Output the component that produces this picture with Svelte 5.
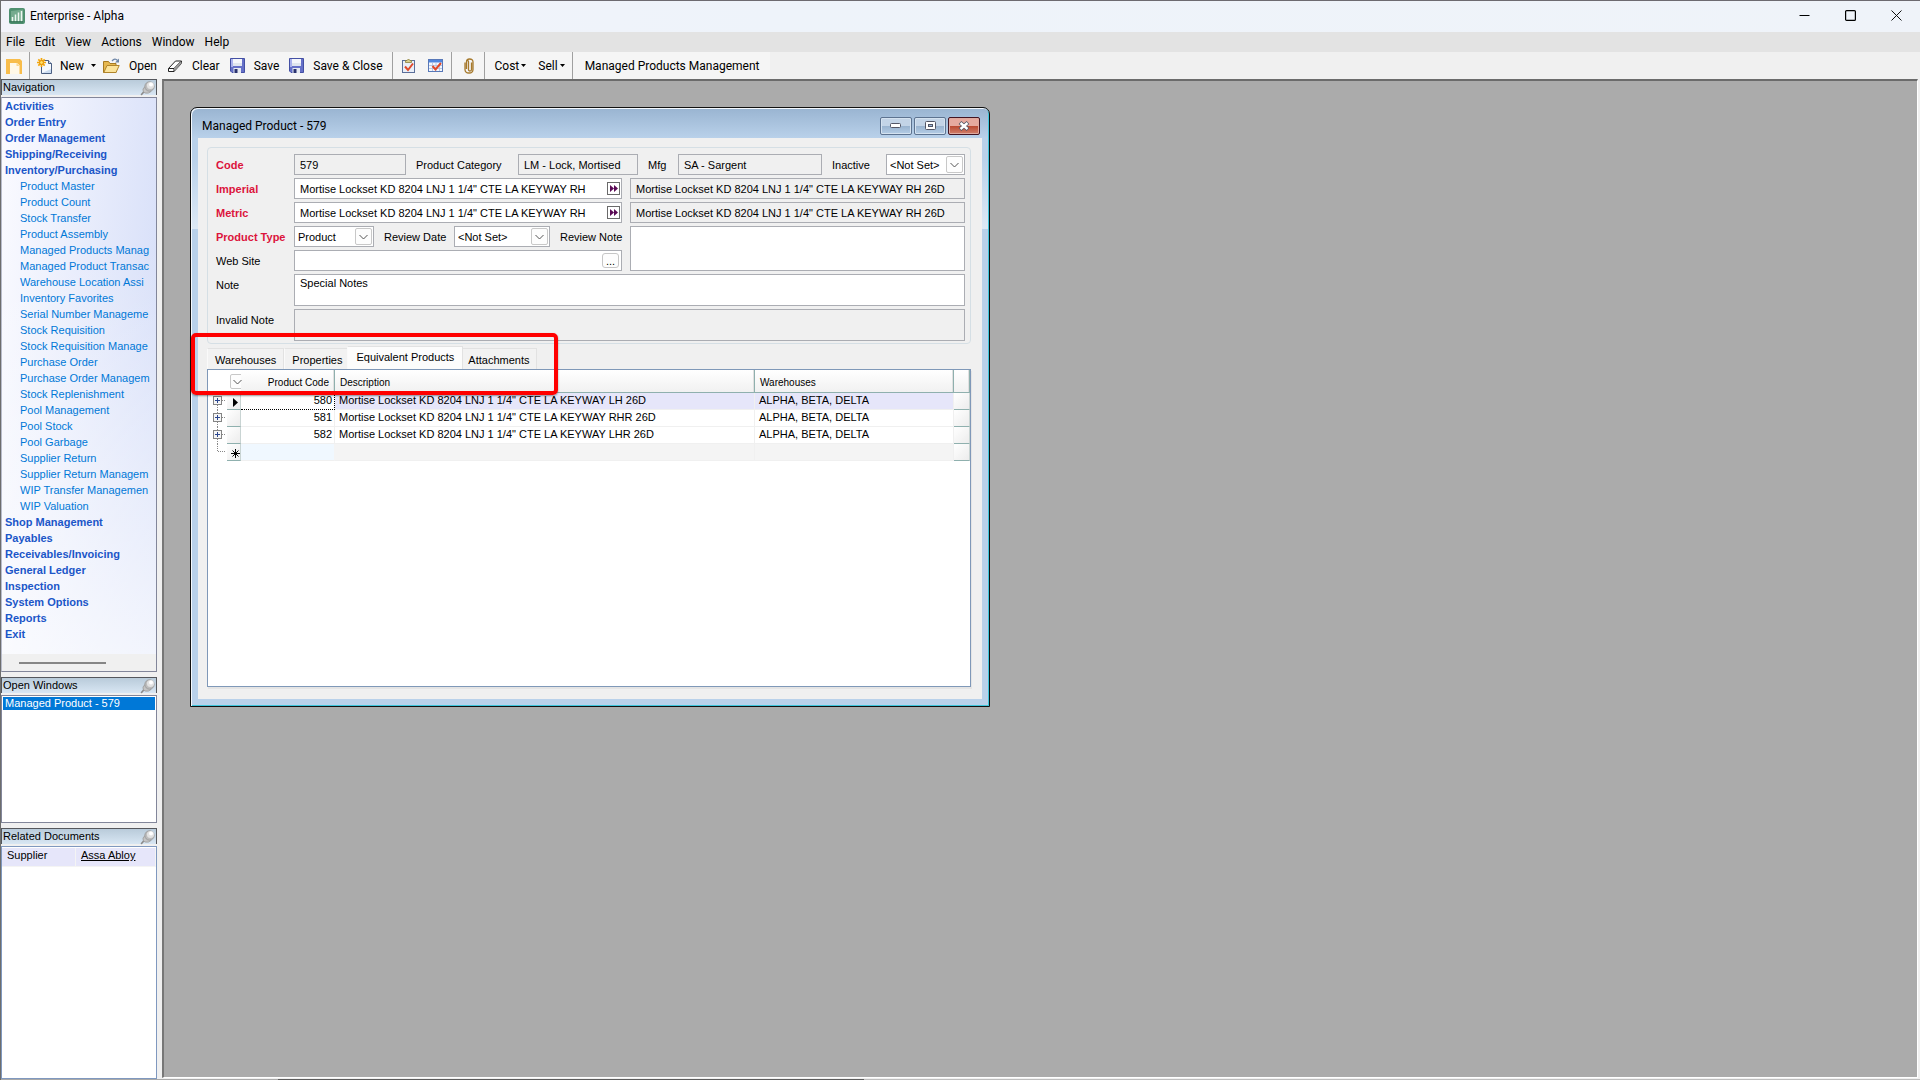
<script lang="ts">
	interface Row {
		code: number;
		description: string;
		warehouses: string;
	}

	const menus = ['File', 'Edit', 'View', 'Actions', 'Window', 'Help'];

	const purchasing = [
		'Product Master',
		'Product Count',
		'Stock Transfer',
		'Product Assembly',
		'Managed Products Manag',
		'Managed Product Transac',
		'Warehouse Location Assi',
		'Inventory Favorites',
		'Serial Number Manageme',
		'Stock Requisition',
		'Stock Requisition Manage',
		'Purchase Order',
		'Purchase Order Managem',
		'Stock Replenishment',
		'Pool Management',
		'Pool Stock',
		'Pool Garbage',
		'Supplier Return',
		'Supplier Return Managem',
		'WIP Transfer Managemen',
		'WIP Valuation'
	];

	const sections: { name: string; items: string[] }[] = [
		{ name: 'Activities', items: [] },
		{ name: 'Order Entry', items: [] },
		{ name: 'Order Management', items: [] },
		{ name: 'Shipping/Receiving', items: [] },
		{ name: 'Inventory/Purchasing', items: purchasing },
		{ name: 'Shop Management', items: [] },
		{ name: 'Payables', items: [] },
		{ name: 'Receivables/Invoicing', items: [] },
		{ name: 'General Ledger', items: [] },
		{ name: 'Inspection', items: [] },
		{ name: 'System Options', items: [] },
		{ name: 'Reports', items: [] },
		{ name: 'Exit', items: [] }
	];

	const tabs = ['Warehouses', 'Properties', 'Equivalent Products', 'Attachments'];
	let activeTab = $state('Equivalent Products');

	const rows: Row[] = [
		{
			code: 580,
			description: 'Mortise Lockset KD 8204 LNJ 1 1/4" CTE LA KEYWAY LH 26D',
			warehouses: 'ALPHA, BETA, DELTA'
		},
		{
			code: 581,
			description: 'Mortise Lockset KD 8204 LNJ 1 1/4" CTE LA KEYWAY RHR 26D',
			warehouses: 'ALPHA, BETA, DELTA'
		},
		{
			code: 582,
			description: 'Mortise Lockset KD 8204 LNJ 1 1/4" CTE LA KEYWAY LHR 26D',
			warehouses: 'ALPHA, BETA, DELTA'
		}
	];
	let selected = $state(0);

	let imperial = $state('Mortise Lockset KD 8204 LNJ 1 1/4" CTE LA KEYWAY RH');
	let metric = $state('Mortise Lockset KD 8204 LNJ 1 1/4" CTE LA KEYWAY RH');
	let note = $state('Special Notes');
</script>

{#snippet pin()}
	<svg class="pin" width="16" height="16" viewBox="0 0 16 16">
		<path d="M1.5 14.5 L5 10.5" stroke="#8a8a8a" stroke-width="1.6" stroke-linecap="round" />
		<path d="M3 9 q-.5 3 2 4 q3.500 1 6 -1.500 l-1 -4 -5 -1 z" fill="#c4c4c4" stroke="#9a9a9a" stroke-width=".8" />
		<circle cx="9.500" cy="6.500" r="4.700" fill="#bcbcbc" stroke="#959595" stroke-width=".8" />
		<circle cx="10.500" cy="5.500" r="3.600" fill="#e2e2e2" />
		<circle cx="11" cy="4.500" r="2" fill="#fff" />
	</svg>
{/snippet}

{#snippet disk()}
	<svg width="15" height="15" viewBox="0 0 15 15">
		<path d="M.5 .5 h14 v14 h-12.500 l-1.500 -1.500 z" fill="#6570c8" stroke="#4450a4" />
		<path d="M1 1 h2 v8 h-2 z" fill="#aab2ee" />
		<path d="M3 1 h9 v7 h-9 z" fill="#f4f6fb" />
		<path d="M3 5 h9 v3 h-9 z" fill="#dfe5ee" />
		<path d="M3.500 10 h7.500 v5 h-7.500 z" fill="#e6eaf2" />
		<path d="M4.500 11 h3 v4 h-3 z" fill="#2b3370" />
	</svg>
{/snippet}

{#snippet caret()}
	<svg class="caret" width="5" height="3" viewBox="0 0 5 3"><path d="M0 0 h5 l-2.500 3 z" /></svg>
{/snippet}

{#snippet chevron()}
	<span class="chevron" aria-hidden="true">
		<svg width="9" height="6" viewBox="0 0 9 6"><path d="M.5 1 L4.500 5 L8.500 1" fill="none" stroke="#555" /></svg>
	</span>
{/snippet}

{#snippet arrows()}
	<svg width="8" height="7" viewBox="0 0 8 7">
		<path d="M0 0 l4 3.500 -4 3.500 z M4 0 l4 3.500 -4 3.500 z" fill="#5a0a55" />
	</svg>
{/snippet}

<div class="app">
	<header class="titlebar">
		<svg width="16" height="16" viewBox="0 0 16 16">
			<rect width="16" height="16" rx="2" fill="#4f9070" />
			<path d="M2 3 L14 1.500 V13 H2 z" fill="#75ab8e" />
			<path d="M3.500 13.500 V9 M6.500 13.500 V6.500 M9.500 13.500 V4.500 M12.500 13.500 V3" stroke="#eef7f1" stroke-width="1.500" />
			<path d="M.5 13.800 h13.500" stroke="#2f6d50" />
		</svg>
		<span class="app-title">Enterprise - Alpha</span>
		<div class="caption-buttons">
			<button aria-label="Minimize">
				<svg width="11" height="11" viewBox="0 0 11 11"><path d="M.5 5.500 h10" stroke="#000" /></svg>
			</button>
			<button aria-label="Maximize">
				<svg width="11" height="11" viewBox="0 0 11 11">
					<rect x=".6" y=".6" width="9.800" height="9.800" rx="1" fill="none" stroke="#000" stroke-width="1.200" />
				</svg>
			</button>
			<button aria-label="Close">
				<svg width="11" height="11" viewBox="0 0 11 11"><path d="M.5 .5 l10 10 M10.500 .5 l-10 10" stroke="#111" /></svg>
			</button>
		</div>
	</header>

	<nav class="menubar">
		{#each menus as menu}
			<button>{menu}</button>
		{/each}
	</nav>

	<div class="toolbar">
		<div class="group first">
			<button aria-label="Navigation pane">
				<svg width="16" height="16" viewBox="0 0 16 16">
					<path d="M0 1 h14 l2 2 v13 h-3 v-9 l-3 -2 h-6 v11 h-4 z" fill="#f8bd4b" />
					<path d="M4 5 h7 l2.500 2.500 v8.500 h-9.500 z" fill="#fff8e8" />
					<path d="M10.500 5 v3 h3" fill="#fbd68a" />
				</svg>
			</button>
		</div>
		<div class="group main">
			<button class="with-icon new">
				<svg width="16" height="16" viewBox="0 0 16 16">
					<path d="M4.500 2.500 h7 l3 3 v10 h-10 z" fill="#f5f9fe" stroke="#4b5f82" />
					<path d="M11.500 2.500 v3 h3" fill="#c6d6ea" stroke="#4b5f82" />
					<path d="M5 15 h9 v-4 z" fill="#cbdcf0" />
					<path d="M4.500 0 v9 M0 4.500 h9 M1.300 1.300 l6.400 6.400 M7.700 1.300 l-6.400 6.400" stroke="#f3a70c" stroke-width="1.700" />
					<circle cx="4.500" cy="4.500" r="1.900" fill="#ffe36a" stroke="#e08700" stroke-width=".8" />
				</svg>
				New {@render caret()}
			</button>
			<button class="with-icon">
				<svg width="17" height="16" viewBox="0 0 17 16">
					<path d="M.5 14.500 v-11 h5 l1.500 2 h6 v9 z" fill="#e6b850" stroke="#a67a22" />
					<path d="M.8 14.500 L4 7.500 h12.200 l-3.200 7 z" fill="#fbe39a" stroke="#b1852b" />
					<path d="M9 3 q3 -3.500 5.500 -.5" fill="none" stroke="#6f87a8" stroke-width="1.300" />
					<path d="M16 .5 v4 h-4 z" fill="#6f87a8" />
				</svg>
				Open
			</button>
			<button class="with-icon">
				<svg width="16" height="16" viewBox="0 0 16 16">
					<path d="M1.500 10.500 L8.500 3 h6 l-.5 3 -7 7.500 h-5.500 z" fill="#fff" stroke="#222" stroke-linejoin="round" />
					<path d="M1.500 10.500 h5.500 L14 3.300 M7 10.500 v3" fill="none" stroke="#222" />
					<path d="M7.500 10.500 l6.500 -7 v2.500 l-6.500 7 z" fill="#999" />
				</svg>
				Clear
			</button>
			<button class="with-icon">{@render disk()}Save</button>
			<button class="with-icon">{@render disk()}Save &amp; Close</button>
		</div>
		<div class="group icons">
			<button aria-label="Tasks">
				<svg width="14" height="15" viewBox="0 0 14 15">
					<rect x=".5" y="2.500" width="12" height="12" fill="#e9eff8" stroke="#5b6f9a" />
					<path d="M3.500 4.500 v-2 h1.500 q1.500 -3 3 0 h1.500 v2 z" fill="#d9cf8c" stroke="#8c7f3d" stroke-width=".8" />
					<path d="M3 8.500 l3 3.500 5 -6.500" fill="none" stroke="#e0492a" stroke-width="2" />
				</svg>
			</button>
			<button aria-label="Schedule">
				<svg width="15" height="15" viewBox="0 0 15 15">
					<rect x=".5" y="1.500" width="14" height="12" fill="#f3f7fd" stroke="#5878b8" />
					<path d="M1 2 h13 v2.500 h-13 z" fill="#4f86e0" />
					<path d="M1 7.500 h13 M1 10.500 h13 M4.500 5 v8 M8 5 v8 M11.500 5 v8" stroke="#a9bddd" stroke-width=".8" />
					<path d="M4.500 8 l3 3.500 5.500 -6.500" fill="none" stroke="#e0492a" stroke-width="2" />
				</svg>
			</button>
		</div>
		<div class="group clip">
			<button aria-label="Attachments">
				<svg width="12" height="16" viewBox="0 0 12 16">
					<path
						d="M8.500 4.500 v7 q0 1.500 -1.500 1.500 q-1.500 0 -1.500 -1.500 v-7.500 q0 -1.500 -1 -1.500 M2 4.500 v7 q0 3.500 4 3.500 q4 0 4 -3.500 v-7.500 q0 -3 -3.500 -3 q-3 0 -3 3 v7"
						fill="none"
						stroke="#a6792c"
						stroke-width="1.300"
					/>
				</svg>
			</button>
		</div>
		<div class="group prices">
			<button>Cost {@render caret()}</button>
			<button>Sell {@render caret()}</button>
		</div>
		<div class="group last">
			<button>Managed Products Management</button>
		</div>
	</div>

	<div class="workspace">
		<aside>
			<section>
				<h2>Navigation {@render pin()}</h2>
				<div class="pane nav">
					<ul>
						{#each sections as section}
							<li>
								<a class="section" href="#top">{section.name}</a>
								{#each section.items as item}
									<a class="item" href="#top">{item}</a>
								{/each}
							</li>
						{/each}
					</ul>
					<div class="scroll-track"><div class="scroll-thumb"></div></div>
				</div>
			</section>
			<section>
				<h2>Open Windows {@render pin()}</h2>
				<div class="pane windows">
					<button>Managed Product - 579</button>
				</div>
			</section>
			<section class="related">
				<h2>Related Documents {@render pin()}</h2>
				<div class="pane documents">
					<table>
						<tbody>
							<tr>
								<td>Supplier</td>
								<td><a href="#top">Assa Abloy</a></td>
							</tr>
						</tbody>
					</table>
				</div>
			</section>
		</aside>

		<main>
			<div class="window">
				<div class="window-title">
					<span>Managed Product - 579</span>
					<div class="window-buttons">
						<button aria-label="Minimize window">
							<svg width="12" height="6" viewBox="0 0 12 6">
								<rect x=".5" y=".5" width="10" height="4" rx="1" fill="#fff" stroke="#535666" />
							</svg>
						</button>
						<button aria-label="Restore window">
							<svg width="11" height="10" viewBox="0 0 11 10">
								<rect x=".5" y=".5" width="10" height="8" rx="1" fill="#fff" stroke="#535666" />
								<rect x="3.500" y="3.500" width="4" height="2" fill="#9db9d8" stroke="#535666" />
							</svg>
						</button>
						<button class="close" aria-label="Close window">
							<svg width="12" height="10" viewBox="0 0 12 10">
								<path d="M2 1.500 L10 8.500 M10 1.500 L2 8.500" stroke="#535666" stroke-width="4" />
								<path d="M2.500 2 L9.500 8 M9.500 2 L2.500 8" stroke="#fff" stroke-width="2.400" />
							</svg>
						</button>
					</div>
				</div>

				<div class="client">
					<form class="details">
						<label class="required" for="code">Code</label>
						<div class="code-row">
							<input id="code" value="579" readonly />
							<label for="category">Product Category</label>
							<input id="category" value="LM - Lock, Mortised" readonly />
							<label for="mfg">Mfg</label>
							<input id="mfg" value="SA - Sargent" readonly />
							<label for="inactive">Inactive</label>
							<div class="combo">
								<select id="inactive"><option>&lt;Not Set&gt;</option></select>
								{@render chevron()}
							</div>
						</div>

						<label class="required" for="imperial">Imperial</label>
						<div class="box">
							<input id="imperial" bind:value={imperial} />
							<button type="button" class="expand" aria-label="Build imperial description">{@render arrows()}</button>
						</div>
						<input aria-label="Imperial description" value={imperial + ' 26D'} readonly />

						<label class="required" for="metric">Metric</label>
						<div class="box">
							<input id="metric" bind:value={metric} />
							<button type="button" class="expand" aria-label="Build metric description">{@render arrows()}</button>
						</div>
						<input aria-label="Metric description" value={metric + ' 26D'} readonly />

						<label class="required" for="type">Product Type</label>
						<div class="type-row">
							<div class="combo">
								<select id="type"><option>Product</option></select>
								{@render chevron()}
							</div>
							<label for="review-date">Review Date</label>
							<div class="combo">
								<select id="review-date"><option>&lt;Not Set&gt;</option></select>
								{@render chevron()}
							</div>
							<label for="review-note">Review Note</label>
						</div>
						<textarea id="review-note" class="review-note"></textarea>

						<label for="site">Web Site</label>
						<div class="box">
							<input id="site" />
							<button type="button" class="browse">...</button>
						</div>

						<label for="note">Note</label>
						<textarea id="note" class="wide" bind:value={note}></textarea>

						<label for="invalid-note">Invalid Note</label>
						<textarea id="invalid-note" class="wide" readonly></textarea>
					</form>

					<div class="tabs" role="tablist">
						{#each tabs as tab}
							<button role="tab" class:active={tab === activeTab} aria-selected={tab === activeTab} onclick={() => (activeTab = tab)}>
								{tab}
							</button>
						{/each}
					</div>

					<div class="grid">
						<table>
							<colgroup>
								<col class="c-tree" />
								<col class="c-marker" />
								<col class="c-code" />
								<col />
								<col class="c-warehouses" />
								<col class="c-end" />
							</colgroup>
							<thead>
								<tr>
									<th class="picker" colspan="2">
										<button aria-label="Choose columns">
											<svg width="9" height="6" viewBox="0 0 9 6"><path d="M.5 1 L4.500 5 L8.500 1" fill="none" stroke="#555" /></svg>
										</button>
									</th>
									<th class="num">Product Code</th>
									<th>Description</th>
									<th>Warehouses</th>
									<th></th>
								</tr>
							</thead>
							<tbody>
								{#each rows as row, i (row.code)}
									<tr class:selected={i === selected} onclick={() => (selected = i)}>
										<td class="tree">
											<svg width="19" height="17" viewBox="0 0 19 17">
												<path d="M9.500 {i === 0 ? 8 : 0} V17 M14 7.500 h4" stroke="#888" stroke-dasharray="1 1" />
												<rect x="5.500" y="3.500" width="8" height="8" fill="#f6f6f6" stroke="#848484" />
												<path d="M7 7.500 h5 M9.500 5 v5" stroke="#2c478f" />
											</svg>
										</td>
										<td class="marker">
											{#if i === selected}
												<svg width="5" height="9" viewBox="0 0 5 9"><path d="M0 0 L5 4.500 L0 9 z" /></svg>
											{/if}
										</td>
										<td class="num">{row.code}</td>
										<td>{row.description}</td>
										<td>{row.warehouses}</td>
										<td class="end"></td>
									</tr>
								{/each}
								<tr class="new-row">
									<td class="tree">
										<svg width="19" height="17" viewBox="0 0 19 17">
											<path d="M9.500 0 V8 M10 7.500 h8" stroke="#888" stroke-dasharray="1 1" />
										</svg>
									</td>
									<td class="marker">
										<svg width="9" height="9" viewBox="0 0 9 9">
											<path d="M4.500 0 v9 M0 4.500 h9 M1.500 1.500 l6 6 M7.500 1.500 l-6 6" stroke="#000" />
										</svg>
									</td>
									<td class="num"></td>
									<td></td>
									<td></td>
									<td class="end"></td>
								</tr>
							</tbody>
						</table>
					</div>
				</div>

				<div class="highlight"></div>
			</div>
		</main>
	</div>
	<div class="edge"></div>
</div>

<style>
	:global(body) {
		margin: 0;
		background: #f0f0f0;
	}

	.app {
		height: 100vh;
		box-sizing: border-box;
		display: flex;
		flex-direction: column;
		border-top: 1px solid #6d6a70;
		border-left: 1px solid #6d6d6d;
		background: #f0f0f0;
		color: #000;
		font: 11px/16px 'Liberation Sans', Arial, sans-serif;
		overflow: hidden;
	}

	.app :global(*) {
		box-sizing: border-box;
	}

	button,
	input,
	select,
	textarea {
		font: inherit;
		color: inherit;
		margin: 0;
		border-radius: 0;
	}

	button {
		padding: 0;
		border: 0;
		background: none;
	}

	svg {
		display: block;
		flex: none;
	}

	.titlebar,
	.menubar,
	.toolbar,
	.window-title {
		display: flex;
		align-items: center;
		font-family: Roboto, 'Segoe UI', sans-serif;
		font-size: 12px;
	}

	.titlebar {
		flex: none;
		height: 31px;
		padding: 0 1px 2px 8px;
		gap: 5px;
		background: linear-gradient(90deg, #f3f3fa, #eef3fa 40%, #eff3f9);
	}

	.caption-buttons {
		display: flex;
		margin-left: auto;
	}

	.caption-buttons button {
		width: 46px;
		height: 29px;
		display: flex;
		align-items: center;
		justify-content: center;
	}

	.menubar {
		flex: none;
		height: 20px;
		padding-left: 5px;
		gap: 10px;
		background: #e3e3e3;
	}

	.toolbar {
		flex: none;
		height: 27px;
	}

	.group {
		height: 100%;
		display: flex;
		align-items: center;
		background: #f5f5f5;
	}

	.group + .group {
		border-left: 1px solid #a0a0a0;
	}

	.group button {
		display: flex;
		align-items: center;
		gap: 2px;
	}

	.group .with-icon {
		gap: 9px;
	}

	.group .new {
		gap: 7px;
	}

	.first {
		padding: 0 7px 0 5px;
	}

	.main {
		gap: 10px;
		padding: 0 9px 0 7px;
	}

	.main .new {
		margin-right: -3px;
	}

	.icons {
		padding: 0 8px 0 9px;
		gap: 12px;
	}

	.clip {
		padding: 0 9px 0 11px;
	}

	.prices {
		padding: 0 7px 0 10px;
		gap: 12px;
	}

	.last {
		padding: 0 11px 0 12px;
	}

	.workspace {
		flex: 1;
		min-height: 0;
		display: flex;
		gap: 5px;
	}

	aside {
		flex: none;
		width: 156px;
		display: flex;
		flex-direction: column;
		gap: 5px;
	}

	h2 {
		margin: 0 0 2px;
		height: 16px;
		padding-left: 1px;
		display: flex;
		justify-content: space-between;
		border: 1px solid #55575c;
		border-bottom: 0;
		background: linear-gradient(#b9cbda, #d8e6f3);
		font-size: 11px;
		font-weight: normal;
		line-height: 14px;
	}

	.pane {
		border: 1px solid #82869a;
		background: #fff;
	}

	.nav {
		border-left-color: #b8bccb;
	}

	.nav ul {
		list-style: none;
		margin: 0;
		padding: 0 0 12px;
		background: linear-gradient(170deg, rgba(255, 255, 255, 0) 30%, rgba(255, 255, 255, 0.7)),
			linear-gradient(95deg, #fbfbff, #d3dcf8);
	}

	.nav a {
		display: block;
		text-decoration: none;
		white-space: nowrap;
		overflow: hidden;
	}

	.nav .section {
		padding-left: 3px;
		color: #1b56c8;
		font-weight: bold;
	}

	.nav .item {
		padding-left: 18px;
		color: #0078d7;
	}

	.scroll-track {
		height: 17px;
		padding: 8px 50px 0 17px;
		background: #f0f0f0;
	}

	.scroll-thumb {
		height: 2px;
		background: #868686;
	}

	.windows {
		height: 128px;
		padding: 1px;
	}

	.windows button {
		display: block;
		width: 100%;
		height: 13px;
		padding-left: 2px;
		background: #0078d7;
		color: #fff;
		line-height: 13px;
		text-align: left;
	}

	.related {
		flex: 1;
		display: flex;
		flex-direction: column;
	}

	.documents {
		flex: 1;
		border-color: #7f98bf;
		padding: 1px 0;
	}

	.documents table {
		width: 100%;
		border-spacing: 0;
	}

	.documents td {
		height: 19px;
		padding: 0 5px 3px;
		border-right: 1px solid #f4f4f4;
		border-bottom: 1px solid #f4f4f4;
		background: #e6e6fa;
		line-height: 15px;
	}

	.documents td:first-child {
		width: 74px;
	}

	.documents a {
		color: #000;
	}

	main {
		flex: 1;
		position: relative;
		margin: 0 2px 1px 0;
		border-top: 2px solid #6b6b6b;
		border-left: 2px solid #777;
		border-right: 1px solid #fff;
		border-bottom: 1px solid #fff;
		background: #ababab;
		overflow: hidden;
	}

	.edge {
		flex: none;
		height: 1px;
		background: linear-gradient(90deg, #a9a9a9 0 277px, #5c5c5c 277px 863px, #bdbdbd 863px);
	}

	.window {
		position: absolute;
		left: 26px;
		top: 26px;
		width: 800px;
		display: flex;
		flex-direction: column;
		border: 1px solid #111;
		border-radius: 7px 7px 0 0;
		background: linear-gradient(#99b4d1, #b9d1ea 30px 50px, #dde9f5 121px, #b9d1ea 121px);
		box-shadow:
			inset 1px 1px #f4f9fe,
			inset -1px -1px #3fc6dc;
	}

	.window-title {
		height: 30px;
		padding: 6px 9px 0 11px;
		justify-content: space-between;
	}

	.window-buttons {
		display: flex;
		gap: 2px;
	}

	.window-buttons button {
		width: 32px;
		height: 18px;
		display: flex;
		align-items: center;
		justify-content: center;
		border: 1px solid #5d7390;
		border-radius: 2px;
		background: linear-gradient(#c3d4e7 0 48%, #9ab4d0 52%, #b5cde6);
		box-shadow: inset 0 0 0 1px #d4e2f0;
	}

	.window-buttons .close {
		border-color: #431422;
		background: linear-gradient(#e6a99f 0 48%, #bb4a33 52%, #d1806c);
		box-shadow: inset 0 0 0 1px #dfa99f;
	}

	.client {
		margin: 0 7px 7px;
		padding: 9px 11px 12px 9px;
		background: #f0f0f0;
	}

	.details {
		display: grid;
		grid-template-columns: 78px 328px 1fr;
		row-gap: 3px;
		padding: 6px 5px 2px 8px;
		border: 1px solid #d5dfe5;
		border-radius: 4px;
	}

	.details > label {
		padding-top: 1px;
		line-height: 20px;
	}

	.required {
		color: #dc143c;
		font-weight: bold;
	}

	.details input,
	.details textarea,
	.box,
	.combo {
		height: 21px;
		border: 1px solid #abadb3;
		background: #fff;
	}

	.details input,
	.details textarea {
		min-width: 0;
		padding: 0 5px;
		resize: none;
		outline: none;
	}

	.details [readonly] {
		background: #f0f0f0;
	}

	.code-row,
	.type-row {
		display: grid;
		align-items: center;
		white-space: nowrap;
	}

	.code-row {
		grid-column: 2 / -1;
		grid-template-columns: 112px 112px 120px 40px 144px 64px 1fr;
	}

	.type-row {
		grid-template-columns: 80px 80px 96px 1fr;
	}

	.code-row label,
	.type-row label {
		padding-left: 10px;
	}

	.details > input,
	.review-note {
		margin-left: 8px;
	}

	.details .review-note {
		grid-row: span 2;
		height: auto;
	}

	.details .wide {
		grid-column: 2 / -1;
		height: 32px;
	}

	.box {
		display: flex;
		align-items: center;
		padding-right: 1px;
	}

	.details .box input {
		flex: 1;
		height: 19px;
		border: 0;
	}

	.expand {
		width: 13px;
		height: 13px;
		display: flex;
		align-items: center;
		justify-content: center;
		border: 1px solid #6a6a6a;
		background: #fff;
	}

	.browse {
		width: 17px;
		height: 15px;
		margin-right: 1px;
		border: 1px solid #c6c6c6;
		border-radius: 3px;
		background: #fdfdfd;
		line-height: 12px;
	}

	.combo {
		position: relative;
	}

	.combo select {
		appearance: none;
		width: 100%;
		height: 19px;
		padding: 0 20px 0 3px;
		border: 0;
		background: transparent;
		outline: none;
	}

	.chevron,
	.picker button {
		width: 17px;
		height: 17px;
		display: flex;
		align-items: center;
		justify-content: center;
		border: 1px solid #c8c8c8;
		border-radius: 2px;
		background: #fdfdfd;
	}

	.chevron {
		position: absolute;
		top: 1px;
		right: 1px;
		pointer-events: none;
	}

	.tabs {
		display: flex;
		align-items: flex-end;
		height: 25px;
		padding-top: 2px;
	}

	.tabs button {
		height: 21px;
		padding: 2px 7px 0;
		border: 1px solid #e2e2e2;
		border-left-color: #fafafa;
		border-bottom: 0;
		background: #f2f2f2;
		line-height: 18px;
	}

	.tabs .active {
		position: relative;
		height: 23px;
		margin: 0 -3px;
		padding: 0 8px 2px;
		background: #fcfcfc;
	}

	.grid {
		height: 318px;
		border: 1px solid #7f98b8;
		background: #fff;
		box-shadow: 1px 2px #e4e4e4;
	}

	.grid table {
		width: 100%;
		table-layout: fixed;
		border-collapse: separate;
		border-spacing: 0;
	}

	.c-tree {
		width: 19px;
	}

	.c-marker {
		width: 14px;
	}

	.c-code {
		width: 94px;
	}

	.c-warehouses {
		width: 199px;
	}

	.c-end {
		width: 16px;
	}

	.grid th {
		height: 23px;
		padding: 4px 5px 0;
		border-right: 1px solid #8fb0ae;
		border-bottom: 1px solid #8fb0ae;
		background: linear-gradient(#fff, #f1f1f1);
		box-shadow: inset -1px 0 #e0e0e0;
		font-size: 10px;
		font-weight: normal;
		line-height: 16px;
		text-align: left;
	}

	.grid .picker {
		padding: 1px 0 0 22px;
		border-right: 0;
		background: #fff;
		box-shadow: none;
	}

	.picker button {
		width: 15px;
		height: 15px;
	}

	.grid td {
		height: 17px;
		padding: 0 4px;
		border-right: 1px solid #f0f0f0;
		border-bottom: 1px solid #f0f0f0;
		line-height: 14px;
		white-space: nowrap;
		vertical-align: top;
	}

	.grid .num {
		text-align: right;
	}

	.grid td.num {
		padding-right: 2px;
	}

	.selected td {
		background: #e6e6fa;
	}

	.grid .selected .num {
		border-right: 1px dotted #000;
		border-bottom: 1px dotted #000;
		background: #fff;
	}

	.grid .tree {
		padding: 0;
		border: 0;
		background: #fff;
	}

	.grid .marker,
	.grid .end {
		border-right: 1px solid #c9d4d3;
		border-bottom: 1px solid #8fb0ae;
		background: linear-gradient(135deg, #fff, #ececec);
	}

	.grid .marker {
		padding: 5px 0 0 6px;
	}

	.new-row td {
		background: #f4f4f4;
	}

	.grid .new-row .marker {
		padding-left: 4px;
	}

	.grid .new-row .num {
		background: #f0f8ff;
		border-right-color: #f4f4f4;
	}

	/* callout drawn over the tab strip and column headers */
	.highlight {
		position: absolute;
		left: 0;
		top: 225px;
		width: 367px;
		height: 62px;
		border: 4px solid #f00;
		border-radius: 5px;
		pointer-events: none;
		box-shadow: 0 1px 2px rgba(0, 0, 0, 0.4);
	}
</style>
